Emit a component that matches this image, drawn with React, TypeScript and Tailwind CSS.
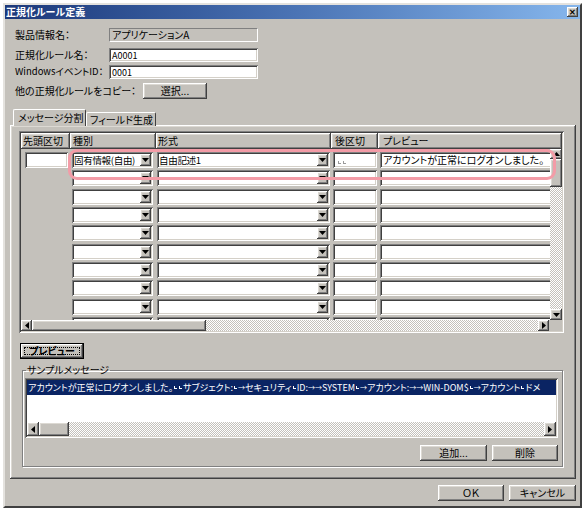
import React from "react";

const sunken =
  "shadow-[inset_1px_1px_0_#808080,inset_-1px_-1px_0_#ffffff,inset_2px_2px_0_#404040,inset_-2px_-2px_0_#d4d0c8]";
const raised =
  "shadow-[inset_-1px_-1px_0_#404040,inset_1px_1px_0_#ffffff,inset_-2px_-2px_0_#808080,inset_2px_2px_0_#dcd9d3]";
const track =
  "[background-image:repeating-conic-gradient(#ffffff_0%_25%,#c4c1bb_0%_50%)] [background-size:2px_2px]";

function Arrow({ dir }: { dir: "up" | "down" | "left" | "right" }) {
  const v = dir === "up" || dir === "down";
  const w = v ? 7 : 4;
  const h = v ? 4 : 7;
  const pts = {
    up: "0,4 7,4 3.5,0",
    down: "0,0 7,0 3.5,4",
    left: "4,0 4,7 0,3.5",
    right: "0,0 0,7 4,3.5",
  }[dir];
  return (
    <svg width={w} height={h} viewBox={`0 0 ${w} ${h}`}>
      <polygon points={pts} fill="#000" />
    </svg>
  );
}

function SBtn({ dir, cls }: { dir: "up" | "down" | "left" | "right"; cls: string }) {
  return (
    <div className={`${cls} shrink-0 bg-[#c4c1bb] ${raised} flex items-center justify-center`}>
      <Arrow dir={dir} />
    </div>
  );
}

function Combo({ w, text }: { w: string; text: string }) {
  return (
    <div className={`${w} h-[16px] bg-white ${sunken} flex items-center pl-[2px] pr-[2px]`}>
      <span className="flex-1 min-w-0 text-[9.5px] tracking-[-0.3px] leading-[12px] whitespace-nowrap">{text}</span>
      <div className={`w-[11px] h-[12px] bg-[#c4c1bb] ${raised} flex items-center justify-center shrink-0`}>
        <Arrow dir="down" />
      </div>
    </div>
  );
}

function SpaceMark({ color }: { color: string }) {
  return <span className={`inline-block w-[3px] h-[3px] border-l border-b ${color} mx-[1px] align-baseline`} />;
}

function Button({ cls, children, def }: { cls: string; children: React.ReactNode; def?: boolean }) {
  if (def) {
    return (
      <div className={`${cls} border border-black bg-[#c4c1bb] shrink-0`}>
        <div className={`w-full h-full ${raised} p-[3px]`}>
          <div className="w-full h-full border border-dotted border-black flex items-center justify-center text-[10px] font-bold leading-none whitespace-nowrap">
            {children}
          </div>
        </div>
      </div>
    );
  }
  return (
    <div className={`${cls} bg-[#c4c1bb] ${raised} flex items-center justify-center text-[10px] leading-none whitespace-nowrap shrink-0`}>
      {children}
    </div>
  );
}

export default function App() {
  const rows = Array.from({ length: 10 });
  return (
    <div className="relative w-[585px] h-[511px] bg-white overflow-hidden font-['Noto_Sans_CJK_JP','Noto_Sans_CJK_SC',sans-serif] [font-feature-settings:'palt'] text-black">
      <div className="ml-[3px] mt-[3px] w-[579px] h-[505px] bg-[#c4c1bb] border-2 border-t-[#e4e2de] border-l-[#e4e2de] border-r-[#404040] border-b-[#404040] flex flex-col">
        {/* Title bar */}
        <div className="h-[14px] bg-linear-to-r from-[#1c387a] via-[#4a73b4] to-[#86b6ec] flex items-center pl-[1px] pr-[2px] shrink-0">
          <span className="flex-1 text-white font-bold text-[10px] leading-none whitespace-nowrap">正規化ルール定義</span>
          <div className={`w-[11px] h-[10px] bg-[#c4c1bb] ${raised} flex items-center justify-center text-[8px] font-bold leading-none`}>
            ✕
          </div>
        </div>

        {/* Form */}
        <div className="pl-[10px] pt-[9px] text-[10px] leading-none whitespace-nowrap">
          <div className="flex items-center h-[14px]">
            <span className="w-[94px]">製品情報名：</span>
            <div className="w-[149px] h-[14px] bg-[#c4c1bb] border border-t-[#808080] border-l-[#808080] border-r-white border-b-white flex items-center pl-[2px]">
              アプリケーションA
            </div>
          </div>
          <div className="flex items-center h-[14px] mt-[6px]">
            <span className="w-[94px]">正規化ルール名：</span>
            <div className={`w-[149px] h-[14px] bg-white ${sunken} flex items-center pl-[3px] text-[9px]`}>A0001</div>
          </div>
          <div className="flex items-center h-[14px] mt-[3px]">
            <span className="w-[94px] text-[9.5px]">WindowsイベントID：</span>
            <div className={`w-[149px] h-[14px] bg-white ${sunken} flex items-center pl-[3px] text-[9px]`}>0001</div>
          </div>
          <div className="flex items-center h-[16px] mt-[4px]">
            <span className="w-[128px]">他の正規化ルールをコピー：</span>
            <Button cls="w-[64px] h-[16px]">選択...</Button>
          </div>
        </div>

        {/* Tabs */}
        <div className="flex items-end h-[17px] pl-[8px] mt-[10px] -mb-[1px] relative z-10 text-[10px] leading-none whitespace-nowrap">
          <div className="w-[73px] h-[17px] bg-[#c4c1bb] border-t border-l border-white border-r border-r-[#404040] rounded-t-[2px] flex items-center pl-[4px]">
            メッセージ分割
          </div>
          <div className="w-[70px] h-[14px] bg-[#c4c1bb] border-t border-l border-white border-r border-r-[#404040] rounded-t-[2px] flex items-center pl-[3px]">
            フィールド生成
          </div>
        </div>

        {/* Panel */}
        <div className={`ml-[5px] w-[566px] h-[354px] ${raised} pl-[9px] pt-[6px] flex flex-col`}>
          {/* Grid */}
          <div className={`w-[545px] h-[202px] ${sunken} p-[2px] flex flex-col`}>
            <div className="flex h-[16px] shrink-0 text-[10px] leading-none whitespace-nowrap">
              <div className={`w-[49px] ${raised} flex items-center pl-[2px]`}>先頭区切</div>
              <div className={`w-[86px] ${raised} flex items-center pl-[3px]`}>種別</div>
              <div className={`w-[175px] ${raised} flex items-center pl-[2px]`}>形式</div>
              <div className={`w-[47px] ${raised} flex items-center pl-[4px]`}>後区切</div>
              <div className={`flex-1 ${raised} flex items-center pl-[5px]`}>プレビュー</div>
            </div>
            <div className="flex flex-1 min-h-0">
              <div className="flex-1 overflow-hidden pt-[3px]">
                {rows.map((_, i) => (
                  <div key={i} className={`flex h-[16px] shrink-0 ${i === 1 || i === 4 || i === 7 ? "mb-[3px]" : "mb-[2px]"}`}>
                    <div className="w-[49px] pl-[4px] shrink-0">
                      {i === 0 && <div className={`w-[43px] h-[16px] bg-white ${sunken}`} />}
                    </div>
                    <div className="w-[86px] pl-[2px] shrink-0">
                      <Combo w="w-[81px]" text={i === 0 ? "固有情報(自由)" : ""} />
                    </div>
                    <div className="w-[175px] pl-[1px] shrink-0">
                      <Combo w="w-[173px]" text={i === 0 ? "自由記述1" : ""} />
                    </div>
                    <div className="w-[47px] pl-[2px] shrink-0">
                      <div className={`w-[44px] h-[16px] bg-white ${sunken} flex items-end pl-[4px] pb-[4px]`}>
                        {i === 0 && (
                          <>
                            <SpaceMark color="border-[#9a9a9a]" />
                            <SpaceMark color="border-[#9a9a9a]" />
                          </>
                        )}
                      </div>
                    </div>
                    <div className="pl-[2px] shrink-0">
                      <div className={`w-[180px] h-[16px] bg-white ${sunken} flex items-center pl-[3px] text-[10px] leading-[12px] whitespace-nowrap`}>
                        {i === 0 ? "アカウントが正常にログオンしました。" : ""}
                      </div>
                    </div>
                  </div>
                ))}
              </div>
              {/* vertical scrollbar */}
              <div className="w-[12px] flex flex-col shrink-0">
                <SBtn dir="up" cls="w-[12px] h-[10px]" />
                <div className={`h-[28px] bg-[#c4c1bb] ${raised} shrink-0`} />
                <div className={`flex-1 ${track}`} />
                <SBtn dir="down" cls="w-[12px] h-[11px]" />
              </div>
            </div>
            {/* horizontal scrollbar */}
            <div className="flex h-[11px] shrink-0">
              <SBtn dir="left" cls="w-[11px] h-[11px]" />
              <div className={`w-[174px] h-[11px] bg-[#c4c1bb] ${raised} shrink-0`} />
              <div className={`flex-1 ${track}`} />
              <SBtn dir="right" cls="w-[11px] h-[11px]" />
              <div className="w-[13px] shrink-0" />
            </div>
          </div>

          {/* Preview button */}
          <div className="mt-[10px] ml-[1px]">
            <Button cls="w-[64px] h-[16px]" def>
              プレビュー
            </Button>
          </div>

          {/* Sample message group */}
          <fieldset className="ml-[3px] mt-[5px] w-[541px] h-[103px] border border-[#808080] shadow-[1px_1px_0_#ffffff,inset_1px_1px_0_#ffffff] px-[2px] flex flex-col">
            <legend className="text-[10px] leading-[12px] ml-[1px] px-[1px] whitespace-nowrap">サンプルメッセージ</legend>
            <div className={`mt-[2px] w-[533px] h-[60px] bg-white ${sunken} p-[2px] flex flex-col`}>
              <div className="h-[15px] bg-[#0a2463] text-white text-[9px] leading-none flex items-center pl-[1px] whitespace-nowrap overflow-hidden shrink-0">
                アカウントが正常にログオンしました。
                <SpaceMark color="border-white" />
                <SpaceMark color="border-white" />
                サブジェクト:
                <SpaceMark color="border-white" />
                <span className="text-[7px]">→</span>
                セキュリティ
                <SpaceMark color="border-white" />
                ID:
                <span className="text-[7px]">→→</span>
                SYSTEM
                <SpaceMark color="border-white" />
                <span className="text-[7px]">→</span>
                アカウント:
                <span className="text-[7px]">→→</span>
                WIN-DOM$
                <SpaceMark color="border-white" />
                <span className="text-[7px]">→</span>
                アカウント
                <SpaceMark color="border-white" />
                ドメ
              </div>
              <div className="flex-1" />
              <div className="flex h-[14px] shrink-0">
                <SBtn dir="left" cls="w-[12px] h-[14px]" />
                <div className={`w-[30px] h-[14px] bg-[#c4c1bb] ${raised} shrink-0`} />
                <div className={`flex-1 ${track}`} />
                <SBtn dir="right" cls="w-[12px] h-[14px]" />
              </div>
            </div>
            <div className="flex justify-end gap-[5px] mt-[7px] pr-[2px]">
              <Button cls="w-[67px] h-[16px]">追加...</Button>
              <Button cls="w-[66px] h-[16px]">削除</Button>
            </div>
          </fieldset>
        </div>

        {/* Bottom buttons */}
        <div className="flex justify-end gap-[5px] mt-[6px] pr-[4px]">
          <Button cls="w-[66px] h-[16px]">ＯＫ</Button>
          <Button cls="w-[67px] h-[16px]">キャンセル</Button>
        </div>
      </div>

      {/* highlight overlay */}
      <div className="absolute left-[68px] top-[149px] w-[488px] h-[31px] rounded-[9px] border-[3px] border-[#f39ca7] pointer-events-none" />
    </div>
  );
}
